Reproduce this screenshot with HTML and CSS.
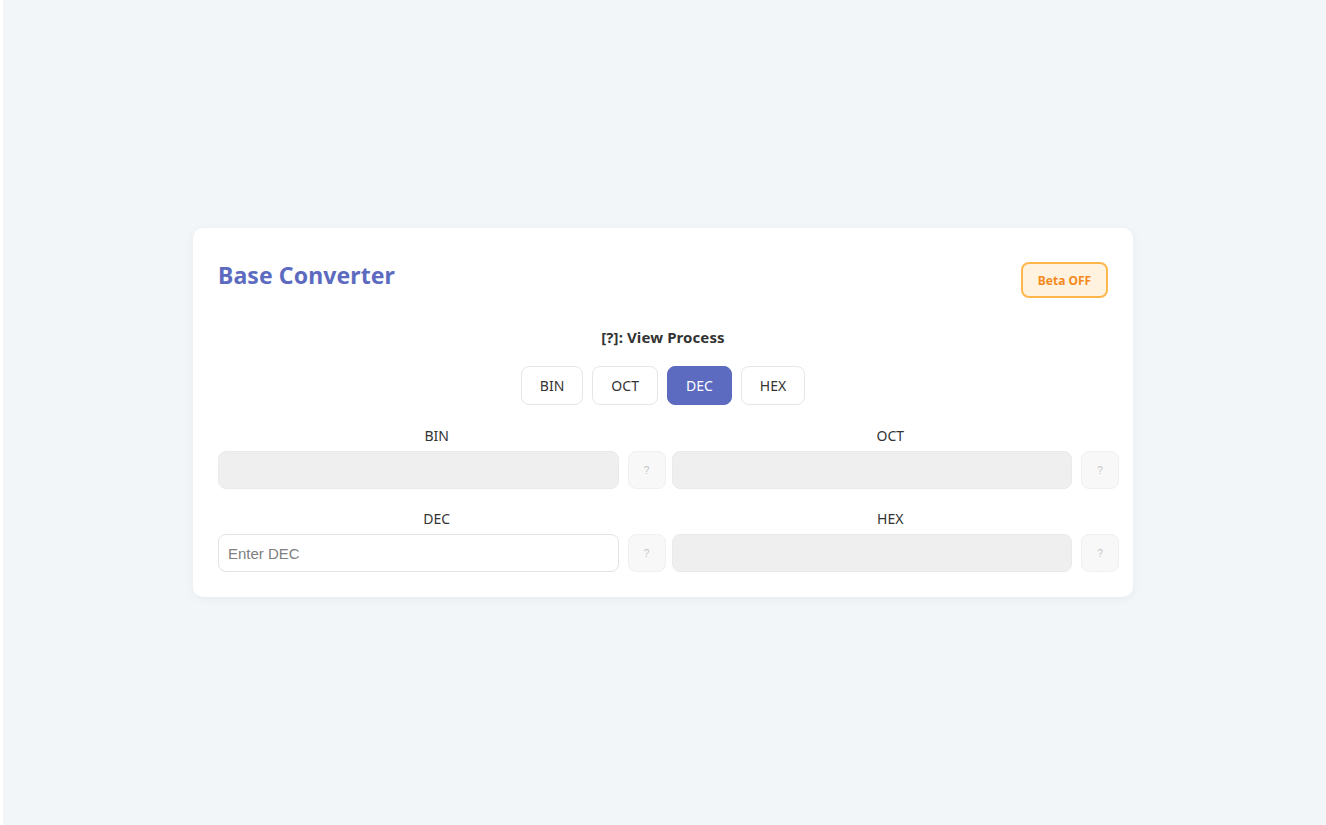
FILE: index.html
```html
<!DOCTYPE html>
<html lang="en">
<head>
<meta charset="utf-8">
<title>Base Converter</title>
<link rel="stylesheet" href="styles.css">
</head>
<body>
<div class="page">
  <div class="card">
    <div class="header">
      <h2 class="title">Base Converter</h2>
      <button class="beta">Beta OFF</button>
    </div>
    <div class="hint">[?]: View Process</div>
    <div class="modes">
      <button class="mode">BIN</button>
      <button class="mode">OCT</button>
      <button class="mode active">DEC</button>
      <button class="mode">HEX</button>
    </div>
    <div class="grid">
      <div class="field">
        <div class="label">BIN</div>
        <div class="row">
          <input class="inp readonly" readonly>
          <button class="q">?</button>
        </div>
      </div>
      <div class="field">
        <div class="label">OCT</div>
        <div class="row">
          <input class="inp readonly" readonly>
          <button class="q">?</button>
        </div>
      </div>
      <div class="field">
        <div class="label">DEC</div>
        <div class="row">
          <input class="inp" placeholder="Enter DEC">
          <button class="q">?</button>
        </div>
      </div>
      <div class="field">
        <div class="label">HEX</div>
        <div class="row">
          <input class="inp readonly" readonly>
          <button class="q">?</button>
        </div>
      </div>
    </div>
  </div>
</div>
</body>
</html>
```
FILE: styles.css
```css
html {
  margin: 0;
  border-left: 3px solid #ffffff;
  background: #f3f6f9;
}
body {
  margin: 0;
  font-family: "Noto Sans", "Open Sans", sans-serif;
  color: #333;
}
.page {
  height: 825px;
  display: flex;
  align-items: center;
  justify-content: center;
  padding-right: 3px;
}
.card {
  width: 940px;
  height: 369px;
  box-sizing: border-box;
  background: #fff;
  border-radius: 10px;
  box-shadow: 0 2px 10px rgba(0, 0, 0, 0.05);
  padding: 25px;
}
.header {
  display: flex;
  justify-content: space-between;
  align-items: center;
  height: 54px;
}
.title {
  margin: 0 0 11px 0;
  font-size: 23px;
  font-weight: 700;
  color: #5c6bc0;
  line-height: 30px;
  letter-spacing: 0.1px;
}
.beta {
  width: 87px;
  height: 36px;
  box-sizing: border-box;
  border: 2px solid #ffb74d;
  background: #fff3e0;
  color: #f48a1e;
  border-radius: 8px;
  font-family: inherit;
  font-size: 12px;
  font-weight: 700;
}
.hint {
  margin-top: 20px;
  text-align: center;
  font-size: 15px;
  font-weight: 700;
  line-height: 20px;
  color: #333;
  letter-spacing: 0.1px;
}
.modes {
  display: flex;
  justify-content: center;
  gap: 9px;
  margin-top: 19px;
}
.mode {
  height: 39px;
  padding: 0 18px;
  border: 1px solid #e6e6e6;
  border-radius: 8px;
  background: #fff;
  color: #333;
  font-family: inherit;
  font-size: 14px;
}
.mode.active {
  background: #5c6bc0;
  border-color: #5c6bc0;
  color: #fff;
}
.grid {
  display: grid;
  grid-template-columns: 1fr 1fr;
  column-gap: 6px;
  row-gap: 20px;
  margin-top: 21px;
  margin-right: -11px;
}
.label {
  text-align: center;
  font-size: 14px;
  line-height: 20px;
  padding-right: 10px;
  margin-bottom: 5px;
  color: #333;
}
.row {
  display: flex;
  gap: 9px;
}
.inp {
  flex: 1;
  min-width: 0;
  height: 38px;
  box-sizing: border-box;
  border: 1px solid #e3e3e3;
  border-radius: 8px;
  padding: 0 9px;
  font-family: "Liberation Sans", "Noto Sans", sans-serif;
  font-size: 15px;
  background: #fff;
  color: #333;
  outline: none;
}
.inp::placeholder {
  color: #808080;
}
.inp.readonly {
  background: #efefef;
  border-color: #eaeaea;
}
.q {
  width: 38px;
  height: 38px;
  flex: none;
  border: 1px solid #f0f0f0;
  border-radius: 8px;
  background: #f8f8f8;
  color: #c4c4c4;
  font-size: 10px;
  padding: 0;
}
```
